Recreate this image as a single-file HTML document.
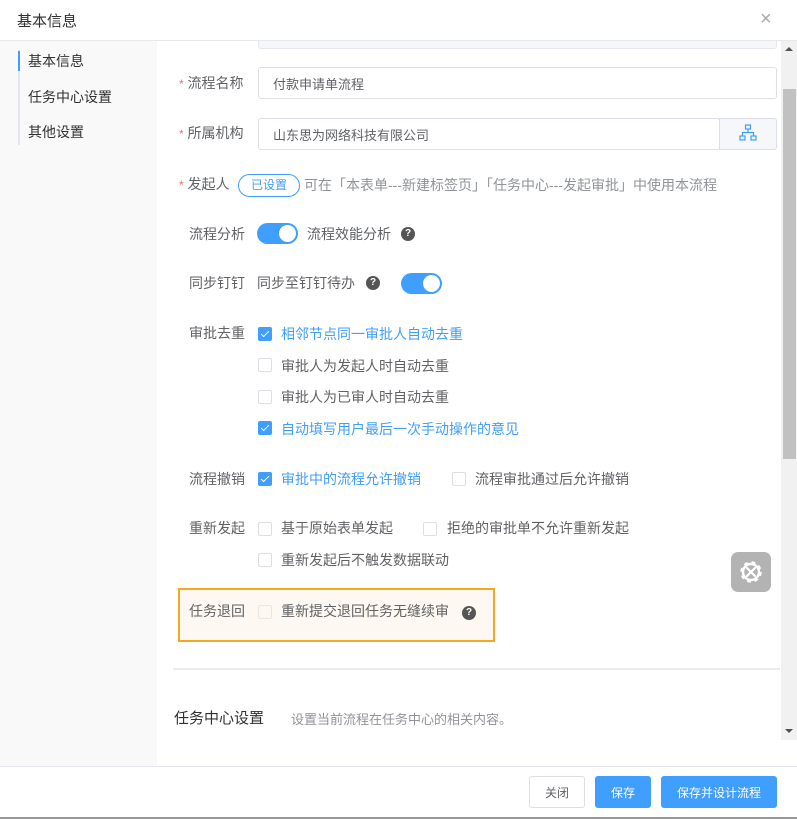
<!DOCTYPE html>
<html><head><meta charset="utf-8"><style>
*{box-sizing:border-box;margin:0;padding:0}
body{width:797px;height:819px;position:relative;overflow:hidden;background:#fff;font-family:"Liberation Sans","Noto Sans CJK SC",sans-serif;color:#606266;font-size:14px}
.a{position:absolute;white-space:nowrap}
.lbl{font-size:14px;color:#606266;line-height:20px}
.star{color:#f56c6c;font-size:12px}
.inp{position:absolute;border:1px solid #dcdfe6;border-radius:3px;background:#fff;font-size:13px;color:#606266;padding-left:14px;display:flex;align-items:center}
.cb{position:absolute;width:14px;height:14px;border:1px solid #dcdfe6;border-radius:2px;background:#fff}
.cb.on{background:#409eff;border-color:#409eff}
.cb.on:after{content:"";position:absolute;left:4px;top:1px;width:3px;height:7px;border:solid #fff;border-width:0 1px 1px 0;transform:rotate(45deg)}
.blue{color:#409eff}
.sw{position:absolute;width:41px;height:21px;border-radius:11px;background:#409eff}
.sw:after{content:"";position:absolute;right:2px;top:2px;width:17px;height:17px;border-radius:50%;background:#fff}
.q{position:absolute;width:14px;height:14px;border-radius:50%;background:#555;color:#fff;font-size:10px;font-weight:bold;text-align:center;line-height:14px}
.btn{position:absolute;height:32px;border-radius:3px;font-size:12px;display:flex;align-items:center;justify-content:center}
</style></head><body>
<div class="a" style="left:17px;top:10px;font-size:15px;color:#303133">基本信息</div>
<div class="a" style="left:760px;top:8px;font-size:20px;color:#aaa;font-weight:300">×</div>
<div class="a" style="left:0;top:40px;width:797px;height:1px;background:#e8e8e8"></div>
<div class="a" style="left:0;top:41px;width:157px;height:725px;background:#f9f9f9"></div>
<div class="a" style="left:18px;top:50px;width:2px;height:95px;background:#e4e7ed"></div>
<div class="a" style="left:18px;top:51px;width:2px;height:20px;background:#409eff"></div>
<div class="a lbl" style="left:28px;top:51px;color:#303133">基本信息</div>
<div class="a lbl" style="left:28px;top:87px;color:#303133">任务中心设置</div>
<div class="a lbl" style="left:28px;top:122px;color:#303133">其他设置</div>

<div class="a" style="left:781px;top:41px;width:16px;height:699px;background:#f1f1f1"></div>
<div class="a" style="left:783px;top:89px;width:13px;height:370px;background:#c1c1c1"></div>
<div class="a" style="left:785px;top:47px;width:0;height:0;border:4px solid transparent;border-bottom:4px solid #505050;border-top:0"></div>
<div class="a" style="left:785px;top:729px;width:0;height:0;border:4px solid transparent;border-top:4px solid #505050;border-bottom:0"></div>

<div class="a" style="left:258px;top:41px;width:519px;height:8px;border:1px solid #e4e7ed;border-top:0;border-radius:0 0 3px 3px;background:#f5f7fa"></div>

<div class="a lbl" style="left:179px;top:73px"><span class="star">*</span> 流程名称</div>
<div class="inp" style="left:258px;top:67px;width:519px;height:32px">付款申请单流程</div>
<div class="a lbl" style="left:179px;top:123px"><span class="star">*</span> 所属机构</div>
<div class="inp" style="left:258px;top:118px;width:462px;height:32px">山东思为网络科技有限公司</div>
<div class="a" style="left:719px;top:118px;width:58px;height:32px;border:1px solid #dcdfe6;border-radius:0 3px 3px 0;background:#f5f7fa"></div>
<svg class="a" style="left:739px;top:124px" width="18" height="18" viewBox="0 0 18 18" fill="none" stroke="#409eff" stroke-width="1.2"><rect x="6.5" y="1" width="5" height="4"/><rect x="1" y="12" width="5" height="4"/><rect x="12" y="12" width="5" height="4"/><path d="M9 5v3.5M3.5 12V8.5h11V12"/></svg>

<div class="a lbl" style="left:179px;top:174px"><span class="star">*</span> 发起人</div>
<div class="a" style="left:238px;top:174px;width:62px;height:23px;border:1px solid #409eff;border-radius:12px;color:#409eff;font-size:12px;text-align:center;line-height:21px">已设置</div>
<div class="a lbl" style="left:304px;top:175px;color:#909399">可在「本表单---新建标签页」「任务中心---发起审批」中使用本流程</div>

<div class="a lbl" style="left:189px;top:224px">流程分析</div>
<div class="sw" style="left:257px;top:223px"></div>
<div class="a lbl" style="left:307px;top:224px">流程效能分析</div>
<div class="q" style="left:401px;top:227px">?</div>

<div class="a lbl" style="left:189px;top:273px">同步钉钉</div>
<div class="a lbl" style="left:257px;top:273px">同步至钉钉待办</div>
<div class="q" style="left:366px;top:276px">?</div>
<div class="sw" style="left:401px;top:273px"></div>

<div class="a lbl" style="left:189px;top:323px">审批去重</div>
<div class="cb on" style="left:258px;top:327px"></div><div class="a lbl blue" style="left:281px;top:324px">相邻节点同一审批人自动去重</div>
<div class="cb" style="left:258px;top:358px"></div><div class="a lbl" style="left:281px;top:356px">审批人为发起人时自动去重</div>
<div class="cb" style="left:258px;top:390px"></div><div class="a lbl" style="left:281px;top:387px">审批人为已审人时自动去重</div>
<div class="cb on" style="left:258px;top:421px"></div><div class="a lbl blue" style="left:281px;top:419px">自动填写用户最后一次手动操作的意见</div>

<div class="a lbl" style="left:189px;top:469px">流程撤销</div>
<div class="cb on" style="left:258px;top:472px"></div><div class="a lbl blue" style="left:281px;top:469px">审批中的流程允许撤销</div>
<div class="cb" style="left:452px;top:472px"></div><div class="a lbl" style="left:475px;top:469px">流程审批通过后允许撤销</div>

<div class="a lbl" style="left:189px;top:518px">重新发起</div>
<div class="cb" style="left:258px;top:522px"></div><div class="a lbl" style="left:281px;top:518px">基于原始表单发起</div>
<div class="cb" style="left:423px;top:522px"></div><div class="a lbl" style="left:447px;top:518px">拒绝的审批单不允许重新发起</div>
<div class="cb" style="left:258px;top:553px"></div><div class="a lbl" style="left:281px;top:550px">重新发起后不触发数据联动</div>

<div class="a" style="left:178px;top:588px;width:317px;height:54px;border:2px solid #f5a623;background:#fdf8f1"></div>
<div class="a lbl" style="left:189px;top:601px">任务退回</div>
<div class="cb" style="left:258px;top:605px;border-color:#ebe5dc;background:#fdf8f1"></div><div class="a lbl" style="left:281px;top:601px">重新提交退回任务无缝续审</div>
<div class="q" style="left:462px;top:606px">?</div>

<div class="a" style="left:731px;top:552px;width:40px;height:40px;border-radius:7px;background:#b3b3b3"></div>
<svg class="a" style="left:736px;top:557px" width="30" height="30" viewBox="0 0 30 30"><circle cx="15" cy="15" r="9" fill="none" stroke="#fff" stroke-width="3.5" stroke-dasharray="3.5 3.6"/><circle cx="15" cy="15" r="8" fill="none" stroke="#fff" stroke-width="2.4"/><path d="M11 11l8 8M19 11l-8 8" stroke="#fff" stroke-width="2.2" stroke-linecap="round"/></svg>

<div class="a" style="left:173px;top:668px;width:607px;height:2px;background:#ececec"></div>
<div class="a" style="left:174px;top:707px;font-size:15px;color:#303133">任务中心设置</div>
<div class="a" style="left:291px;top:709px;font-size:13px;color:#909399">设置当前流程在任务中心的相关内容。</div>

<div class="a" style="left:0;top:766px;width:797px;height:1px;background:#e4e7ed"></div>
<div class="btn" style="left:529px;top:776px;width:56px;border:1px solid #dcdfe6;color:#606266">关闭</div>
<div class="btn" style="left:595px;top:776px;width:56px;background:#409eff;color:#fff">保存</div>
<div class="btn" style="left:661px;top:776px;width:116px;background:#409eff;color:#fff">保存并设计流程</div>
<div class="a" style="left:0;top:817px;width:797px;height:2px;background:#999"></div>
</body></html>
